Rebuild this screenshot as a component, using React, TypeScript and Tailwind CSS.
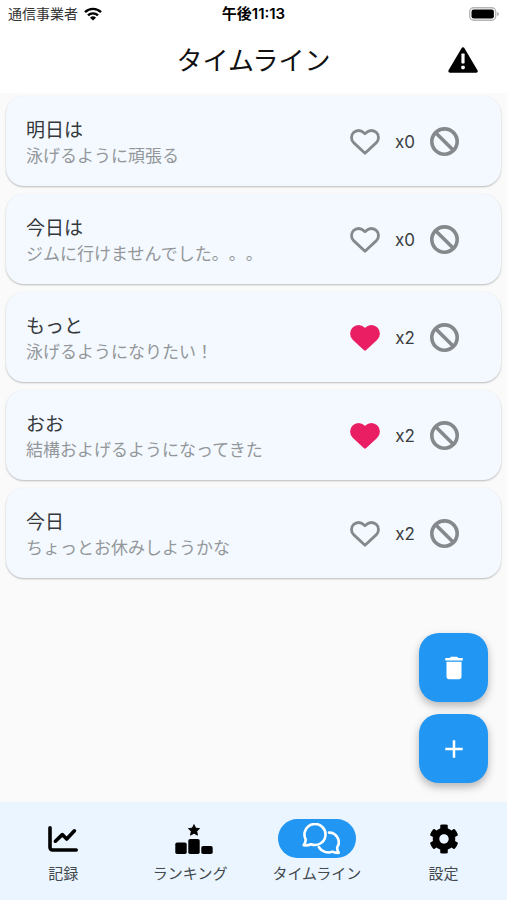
import type { ComponentType } from "react";
import { FaCog } from "react-icons/fa";
import { FaBan } from "react-icons/fa6";
import { MdAdd, MdDelete } from "react-icons/md";

type IconProps = { className?: string };

const posts = [
  { title: "明日は", body: "泳げるように頑張る", likes: 0, liked: false },
  { title: "今日は", body: "ジムに行けませんでした。。。", likes: 0, liked: false },
  { title: "もっと", body: "泳げるようになりたい！", likes: 2, liked: true },
  { title: "おお", body: "結構およげるようになってきた", likes: 2, liked: true },
  { title: "今日", body: "ちょっとお休みしようかな", likes: 2, liked: false },
];

function HeartIcon({ filled }: { filled: boolean }) {
  return (
    <svg
      aria-hidden
      viewBox="0 -3 30 30"
      className={filled ? "w-[30px] fill-[#e91e63] stroke-[#e91e63]" : "w-[30px] fill-none stroke-[#85898c]"}
      strokeWidth="2.8"
      strokeLinejoin="round"
    >
      <path d="M15 24.200 3.600 13.600a7 7 0 0 1 0-10 7 7 0 0 1 10 0L15 4.800l1.400-1.200a7 7 0 0 1 10 0 7 7 0 0 1 0 10z" />
    </svg>
  );
}

function WarningIcon({ className }: IconProps) {
  return (
    <svg aria-hidden viewBox="0 0 30 26" className={className}>
      <path d="M15 2 28 24H2z" fill="#000" stroke="#000" strokeWidth="3.4" strokeLinejoin="round" />
      <rect x="13.4" y="6.600" width="3.200" height="9.800" rx="0.7" fill="#fff" />
      <rect x="13.2" y="18.800" width="3.600" height="3.400" rx="1.100" fill="#fff" />
    </svg>
  );
}

function ChartIcon({ className }: IconProps) {
  return (
    <svg aria-hidden viewBox="0 0 30 26" className={className} fill="none" stroke="currentColor" strokeWidth="3.6" strokeLinecap="round">
      <path d="M2 1.800V21.600a2.400 2.400 0 0 0 2.400 2.400h23.800" />
      <path d="M7.400 15.200 14.300 8.600 18.700 13 26.400 4.800" strokeLinejoin="round" />
    </svg>
  );
}

function RankingIcon({ className }: IconProps) {
  return (
    <svg aria-hidden viewBox="0 0 38 30" className={className} fill="currentColor">
      <path
        d="m19 0.600 1.700 3.500 3.900.5-2.800 2.700.7 3.900L19 9.300l-3.500 1.900.7-3.900L13.400 4.600l3.900-.5z"
        stroke="currentColor"
        strokeWidth="0.8"
        strokeLinejoin="round"
      />
      <rect x="0.3" y="18.500" width="11.400" height="11.500" rx="1.800" />
      <rect x="13.300" y="15" width="11.400" height="15" rx="1.800" />
      <rect x="26.300" y="22" width="11.400" height="8" rx="1.800" />
    </svg>
  );
}

function ChatIcon({ className }: IconProps) {
  return (
    <svg aria-hidden viewBox="0 0 38 32" className={className} fill="none" stroke="currentColor" strokeWidth="2.600" strokeLinecap="round" strokeLinejoin="round">
      <path d="M3.600 16.200a10.500 10.500 0 1 1 5.400 5q-3.400 1.500-7.300 1 2.200-2.600 1.900-6z" />
      <path d="M27 9.600a9.600 9.600 0 0 1 8.200 14.800q-.2 3 1.500 5.400-3.400.4-6.300-1.200a11 11 0 0 1-13.500-4.400" />
    </svg>
  );
}

const tabs: { label: string; icon: ComponentType<IconProps>; iconClass: string; active: boolean }[] = [
  { label: "記録", icon: ChartIcon, iconClass: "h-[26px] w-[30px]", active: false },
  { label: "ランキング", icon: RankingIcon, iconClass: "ml-2 h-[30px] w-[38px]", active: false },
  { label: "タイムライン", icon: ChatIcon, iconClass: "ml-2 h-8 w-[38px]", active: true },
  { label: "設定", icon: FaCog, iconClass: "size-[30px]", active: false },
];

function StatusBar() {
  return (
    <div className="grid h-7 grid-cols-3 items-center px-2 text-sm text-[#333]">
      <div className="flex items-center gap-1.5">
        <span className="whitespace-nowrap">通信事業者</span>
        <svg aria-hidden viewBox="0 0 18 14" className="h-3.5 w-[18px] text-black" fill="none" stroke="currentColor" strokeWidth="2.4">
          <path d="M1 5.2a11.4 11.4 0 0 1 16 0" />
          <path d="M4 8.4a7.2 7.2 0 0 1 10 0" />
          <path d="M9 13.6 6 10.8a4.3 4.3 0 0 1 6 0z" fill="currentColor" stroke="none" />
        </svg>
      </div>
      <span className="text-center text-[15px] font-semibold text-black">午後11:13</span>
      <svg aria-hidden viewBox="0 0 30 14" className="h-3.5 w-[30px] justify-self-end">
        <rect x="0.7" y="0.7" width="26" height="12.6" rx="4" fill="#fff" stroke="#b5b5b5" strokeWidth="1.4" />
        <rect x="2.5" y="2.5" width="22.4" height="9" rx="2.2" fill="#000" />
        <path d="M28.2 5v4c1-.3 1.6-1.1 1.6-2s-.6-1.700-1.600-2z" fill="#aaa" />
      </svg>
    </div>
  );
}

function PostCard({ post }: { post: (typeof posts)[number] }) {
  return (
    <li className="flex h-[90px] items-center rounded-[18px] bg-[#f3f9ff] pr-[42px] pl-5 shadow-[0_1px_2px_rgba(0,0,0,0.26)]">
      <div className="min-w-0 flex-1 pt-1">
        <h2 className="text-[19px] leading-[26px] text-[#35383b]">{post.title}</h2>
        <p className="truncate text-[17px] leading-6 text-[#93979a]">{post.body}</p>
      </div>
      <div className="flex items-center">
        <button type="button" aria-label="いいね" aria-pressed={post.liked}>
          <HeartIcon filled={post.liked} />
        </button>
        <span className="w-[50px] pt-1 text-center text-[17px] text-[#3a3d40]">x{post.likes}</span>
        <button type="button" aria-label="ブロック">
          <FaBan className="size-[29px] text-[#85898c]" />
        </button>
      </div>
    </li>
  );
}

export default function App() {
  return (
    <div className="flex min-h-screen flex-col bg-[#fafafa] font-['Inter','Noto_Sans_CJK_JP',sans-serif] [text-spacing-trim:space-all]">
      <header className="h-[93px] bg-white">
        <StatusBar />
        <div className="grid h-16 grid-cols-[1fr_auto_1fr] items-center pr-[29px]">
          <h1 className="col-start-2 pl-[29px] text-[26px] text-[#111]">タイムライン</h1>
          <button type="button" aria-label="報告" className="justify-self-end">
            <WarningIcon className="w-[30px]" />
          </button>
        </div>
      </header>

      <main className="flex flex-1 flex-col">
        <ul className="flex flex-col gap-2 px-1.5 pt-[3px]">
          {posts.map((post) => (
            <PostCard key={post.body} post={post} />
          ))}
        </ul>
        <div className="mt-auto flex flex-col items-end gap-3 pr-[19px] pb-[19px]">
          <button
            type="button"
            aria-label="削除"
            className="flex size-[69px] items-center justify-center rounded-[20px] bg-[#2196f3] text-white shadow-[0_4px_8px_rgba(0,0,0,0.28)]"
          >
            <MdDelete className="size-[30px]" />
          </button>
          <button
            type="button"
            aria-label="追加"
            className="flex size-[69px] items-center justify-center rounded-[20px] bg-[#2196f3] text-white shadow-[0_4px_8px_rgba(0,0,0,0.28)]"
          >
            <MdAdd className="size-[30px]" />
          </button>
        </div>
      </main>

      <nav className="grid h-[98px] grid-cols-4 bg-[#eaf5ff] pt-[17px]">
        {tabs.map(({ label, icon: Icon, iconClass, active }) => (
          <a
            key={label}
            href="#"
            aria-current={active ? "page" : undefined}
            className="flex flex-col items-center gap-1 text-[15px] leading-6 text-[#44494e]"
          >
            <span
              className={
                active
                  ? "flex h-[39px] w-[78px] items-center justify-center rounded-full bg-[#2196f3] text-white"
                  : "flex h-[39px] w-[78px] items-center justify-center text-black"
              }
            >
              <Icon className={iconClass} />
            </span>
            <span className="whitespace-nowrap">{label}</span>
          </a>
        ))}
      </nav>
    </div>
  );
}
